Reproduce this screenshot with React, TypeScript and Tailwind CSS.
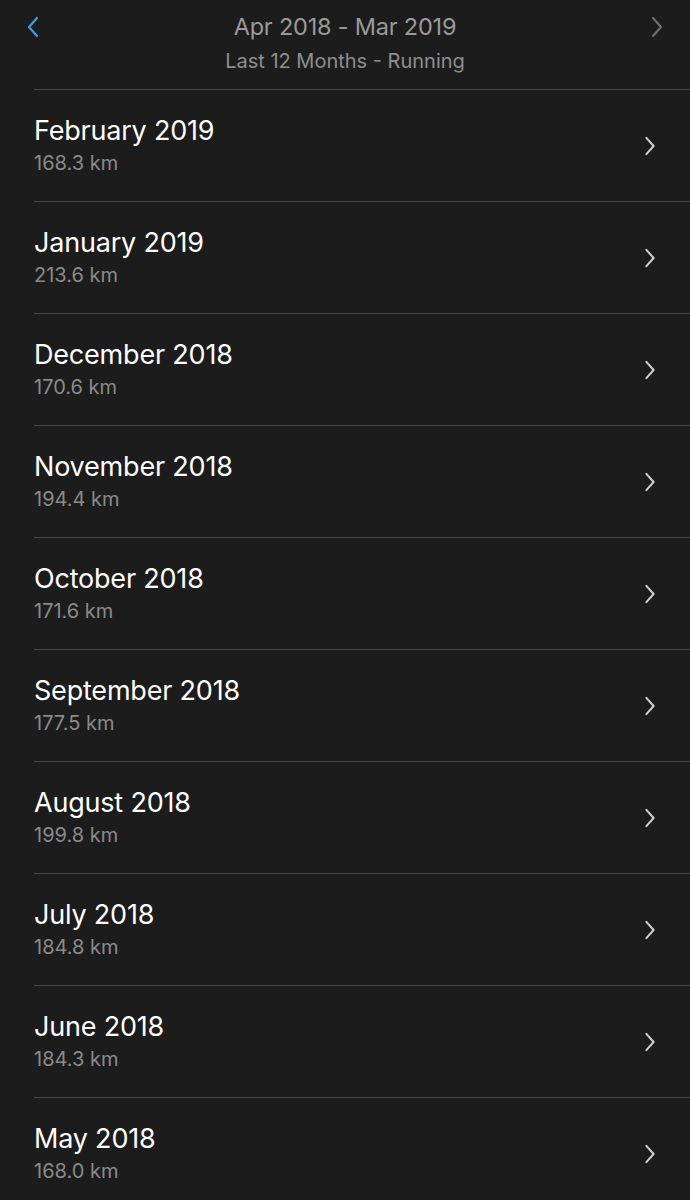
const months = [
  { name: 'February 2019', km: '168.3 km' },
  { name: 'January 2019', km: '213.6 km' },
  { name: 'December 2018', km: '170.6 km' },
  { name: 'November 2018', km: '194.4 km' },
  { name: 'October 2018', km: '171.6 km' },
  { name: 'September 2018', km: '177.5 km' },
  { name: 'August 2018', km: '199.8 km' },
  { name: 'July 2018', km: '184.8 km' },
  { name: 'June 2018', km: '184.3 km' },
  { name: 'May 2018', km: '168.0 km' },
];

function Chevron({ dir, className }: { dir: 'left' | 'right'; className: string }) {
  return (
    <svg viewBox="0 0 12 22" className={className} fill="none" stroke="currentColor" strokeWidth={2.2} strokeLinecap="round" strokeLinejoin="round">
      {dir === 'right' ? <path d="M2 2l8 9-8 9" /> : <path d="M10 2l-8 9 8 9" />}
    </svg>
  );
}

export default function App() {
  return (
    <div className="w-[690px] h-[1200px] overflow-hidden bg-[#1c1c1c] font-['Inter','Liberation_Sans',sans-serif]">
      <div className="h-[89px] flex items-start justify-between px-[27px] pt-[13px]">
        <Chevron dir="left" className="w-[12px] h-[22px] mt-[3px] text-[#3d9ee8]" />
        <div className="flex flex-col items-center text-[#9a9a9a]">
          <div className="text-[23.5px] leading-[28px] tracking-[-0.2px]">Apr 2018 - Mar 2019</div>
          <div className="text-[20px] leading-[24px] mt-[8px] text-[#8e8e8e]">Last 12 Months - Running</div>
        </div>
        <Chevron dir="right" className="w-[12px] h-[22px] mt-[3px] text-[#6d6d6d]" />
      </div>
      <div>
        {months.map((m) => (
          <div key={m.name} className="ml-[34px] border-t border-[#474747] h-[112px] flex items-center justify-between pr-[34px]">
            <div className="flex flex-col -mt-[2px]">
              <div className="text-[27px] leading-[32px] text-white tracking-[-0.2px]">{m.name}</div>
              <div className="text-[20px] leading-[24px] text-[#8a8a8a] mt-[4px]">{m.km}</div>
            </div>
            <Chevron dir="right" className="w-[12px] h-[20px] text-[#d0d0d0]" />
          </div>
        ))}
      </div>
    </div>
  );
}
